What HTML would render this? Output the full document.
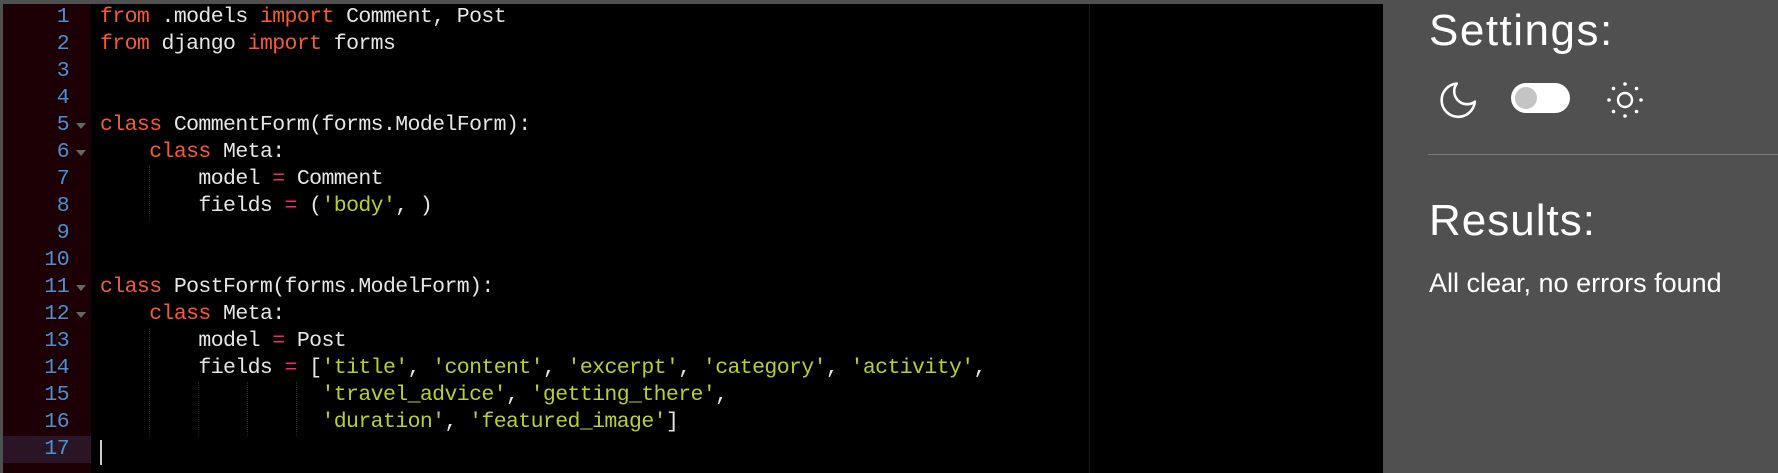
<!DOCTYPE html>
<html><head><meta charset="utf-8"><style>
html,body{margin:0;padding:0;width:1778px;height:473px;overflow:hidden;background:#505050}
#ed{position:absolute;left:3px;top:4px;width:1380px;height:469px;background:#000}
#gut{position:absolute;left:0;top:0;width:88px;height:469px;background:#1c0005}
.ln{position:absolute;left:0;width:88px;height:27px;font:21.5px/27px "Liberation Mono",monospace;letter-spacing:-0.6px;color:#4d8fd0;text-align:right;box-sizing:border-box;padding-right:22px}
.act{background:#2a1526}
.fold{position:absolute;left:73px;width:0;height:0;border-left:5px solid transparent;border-right:5px solid transparent;border-top:6px solid #666}
#code{position:absolute;left:97px;top:0;margin:0;font:21.5px/27px "Liberation Mono",monospace;letter-spacing:-0.6px;color:#e6e6e6;white-space:pre}
.k{color:#fa5a30}.o{color:#f92672}.s{color:#b8d02e}
.g{position:absolute;width:0;border-left:1px dotted #3a2020}
#pm{position:absolute;left:1086px;top:0;width:1px;height:469px;background:#1a1a1a}
#cur{position:absolute;left:97px;top:436px;width:2px;height:25px;background:#ccc}
.r{position:absolute;color:#fff;font-family:"Liberation Sans",sans-serif}
</style></head><body>
<div id="ed">
<div id="gut">
<div class="ln" style="top:0">1</div><div class="ln" style="top:27px">2</div><div class="ln" style="top:54px">3</div><div class="ln" style="top:81px">4</div><div class="ln" style="top:108px">5</div><div class="ln" style="top:135px">6</div><div class="ln" style="top:162px">7</div><div class="ln" style="top:189px">8</div><div class="ln" style="top:216px">9</div><div class="ln" style="top:243px">10</div><div class="ln" style="top:270px">11</div><div class="ln" style="top:297px">12</div><div class="ln" style="top:324px">13</div><div class="ln" style="top:351px">14</div><div class="ln" style="top:378px">15</div><div class="ln" style="top:405px">16</div><div class="ln act" style="top:432px">17</div>
<div class="fold" style="top:119px"></div><div class="fold" style="top:146px"></div><div class="fold" style="top:281px"></div><div class="fold" style="top:308px"></div>
</div>
<div id="pm"></div>
<div class="g" style="left:146px;top:162px;height:54px"></div>
<div class="g" style="left:146px;top:324px;height:108px"></div>
<div class="g" style="left:195px;top:378px;height:54px"></div>
<div class="g" style="left:244px;top:378px;height:54px"></div>
<div class="g" style="left:293px;top:378px;height:54px"></div>
<pre id="code"><span class="k">from</span> .models <span class="k">import</span> Comment, Post
<span class="k">from</span> django <span class="k">import</span> forms


<span class="k">class</span> CommentForm(forms.ModelForm):
    <span class="k">class</span> Meta:
        model <span class="o">=</span> Comment
        fields <span class="o">=</span> (<span class="s">'body'</span>, )


<span class="k">class</span> PostForm(forms.ModelForm):
    <span class="k">class</span> Meta:
        model <span class="o">=</span> Post
        fields <span class="o">=</span> [<span class="s">'title'</span>, <span class="s">'content'</span>, <span class="s">'excerpt'</span>, <span class="s">'category'</span>, <span class="s">'activity'</span>,
                  <span class="s">'travel_advice'</span>, <span class="s">'getting_there'</span>,
                  <span class="s">'duration'</span>, <span class="s">'featured_image'</span>]
</pre>
<div id="cur"></div>
</div>
<div class="r" style="left:1429px;top:6px;font-size:44px;font-weight:300;letter-spacing:1.5px">Settings:</div>
<svg style="position:absolute;left:1437px;top:80px" width="220" height="42" viewBox="0 0 220 42">
<path transform="translate(-1,-2) scale(1.85)" d="M21 12.79A9 9 0 1 1 11.21 3 7 7 0 0 0 21 12.79z" fill="none" stroke="#fff" stroke-width="1.4" stroke-linejoin="round"/>
<rect x="74" y="3" width="59" height="30" rx="15" fill="#fff"/>
<circle cx="89" cy="18" r="11" fill="#c4c4c4"/>
<circle cx="188" cy="20" r="7" fill="none" stroke="#fff" stroke-width="2.4"/>
<g fill="#fff"><circle cx="188" cy="4" r="1.8"/><circle cx="188" cy="36" r="1.8"/><circle cx="172" cy="20" r="1.8"/><circle cx="204" cy="20" r="1.8"/><circle cx="176.5" cy="8.5" r="1.8"/><circle cx="199.5" cy="8.5" r="1.8"/><circle cx="176.5" cy="31.5" r="1.8"/><circle cx="199.5" cy="31.5" r="1.8"/></g>
</svg>
<div style="position:absolute;left:1428px;top:154px;width:350px;height:1px;background:#7a7a7a"></div>
<div class="r" style="left:1429px;top:196px;font-size:44px;font-weight:300;letter-spacing:1px">Results:</div>
<div class="r" style="left:1429px;top:268px;font-size:27px">All clear, no errors found</div>
</body></html>
